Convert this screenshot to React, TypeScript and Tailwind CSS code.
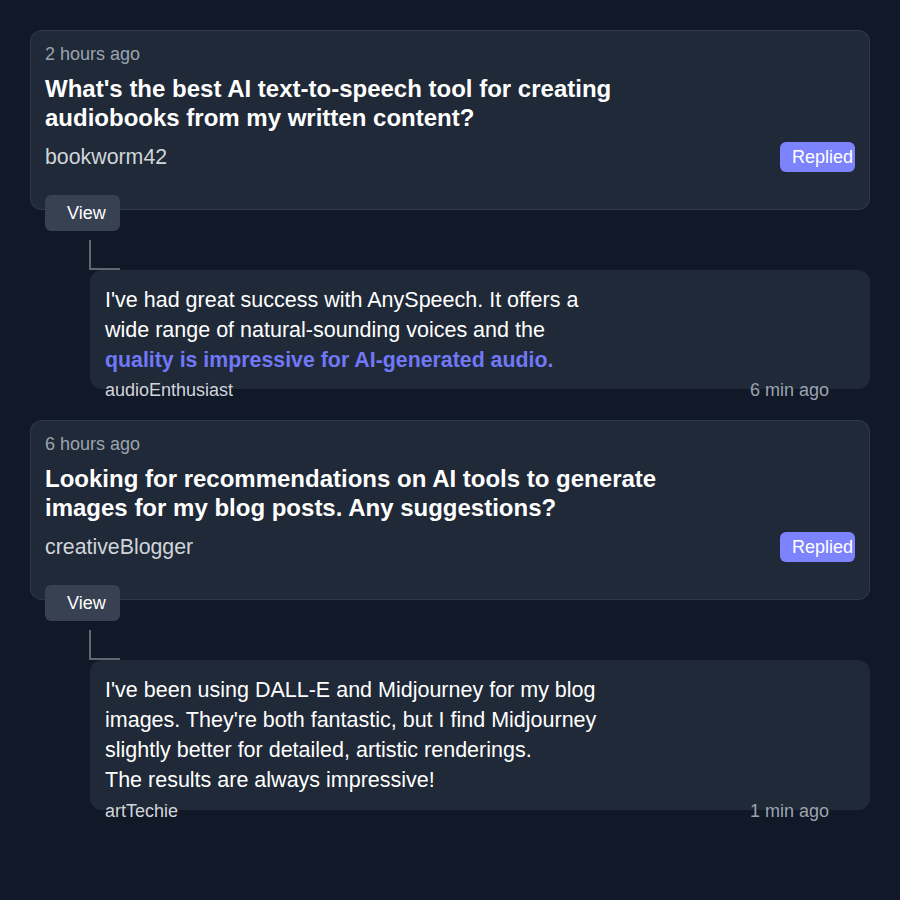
import React from "react";

type Thread = {
    time: string;
    title: string;
    author: string;
    reply: React.ReactNode;
    replyAuthor: string;
    replyTime: string;
};

const threads: Thread[] = [
    {
        time: "2 hours ago",
        title: "What's the best AI text-to-speech tool for creating audiobooks from my written content?",
        author: "bookworm42",
        reply: (
            <>
                I've had great success with AnySpeech. It offers a wide range of natural-sounding voices and the{" "}
                <span className="text-[21.33px] font-bold text-[#7078f6]">quality is impressive for AI-generated audio.</span>
            </>
        ),
        replyAuthor: "audioEnthusiast",
        replyTime: "6 min ago",
    },
    {
        time: "6 hours ago",
        title: "Looking for recommendations on AI tools to generate images for my blog posts. Any suggestions?",
        author: "creativeBlogger",
        reply: (
            <>
                I've been using DALL-E and Midjourney for my blog images. They're both fantastic, but I find Midjourney slightly better for detailed, artistic renderings.
                <br />
                The results are always impressive!
            </>
        ),
        replyAuthor: "artTechie",
        replyTime: "1 min ago",
    },
];

function ThreadItem({ t }: { t: Thread }) {
    return (
        <div className="mb-[18px]">
            <div className="rounded-xl border border-[#334155]/70 bg-[#1f2937] px-[14px] pt-[9px] pb-[37px]">
                <div className="text-[18px] leading-[28px] text-[#9ca3af]">{t.time}</div>
                <h2 className="mt-[6px] max-w-2xl text-[24px] leading-[29px] font-bold text-white">{t.title}</h2>
                <div className="mt-[10px] flex items-center justify-between">
                    <span className="text-[21.33px] leading-[28px] text-[#d1d5db]">{t.author}</span>
                    <span className="rounded-md bg-[#7c83fd] py-px pl-3 pr-0.5 text-[18px] leading-[28px] text-white">Replied</span>
                </div>
            </div>
            <button className="relative z-10 -mt-[15px] ml-[15px] block rounded-md bg-[#374151] py-1 pl-[22px] pr-[14px] text-[18px] leading-[28px] text-white">
                View
            </button>
            <div className="mt-[9px] ml-[59px] h-[30px] w-[31px] border-b-2 border-l-2 border-[#5f6674]" />
            <div className="ml-[60px] rounded-xl bg-[#1f2937] px-[15px] pt-[16px] pb-[14px]">
                <p className="max-w-[510px] text-[21.5px] leading-[29.8px] text-white">{t.reply}</p>
            </div>
            <div className="-mt-[11px] ml-[75px] mr-[41px] flex justify-between text-[18px] leading-[24px]">
                <span className="text-[#d1d5db]">{t.replyAuthor}</span>
                <span className="text-[#9ca3af]">{t.replyTime}</span>
            </div>
        </div>
    );
}

export default function App() {
    return (
        <div className="min-h-[900px] bg-[#111827] p-[30px] [font-family:'Liberation_Sans',Arial,sans-serif]">
            {threads.map((t, i) => (
                <ThreadItem key={i} t={t} />
            ))}
        </div>
    );
}
